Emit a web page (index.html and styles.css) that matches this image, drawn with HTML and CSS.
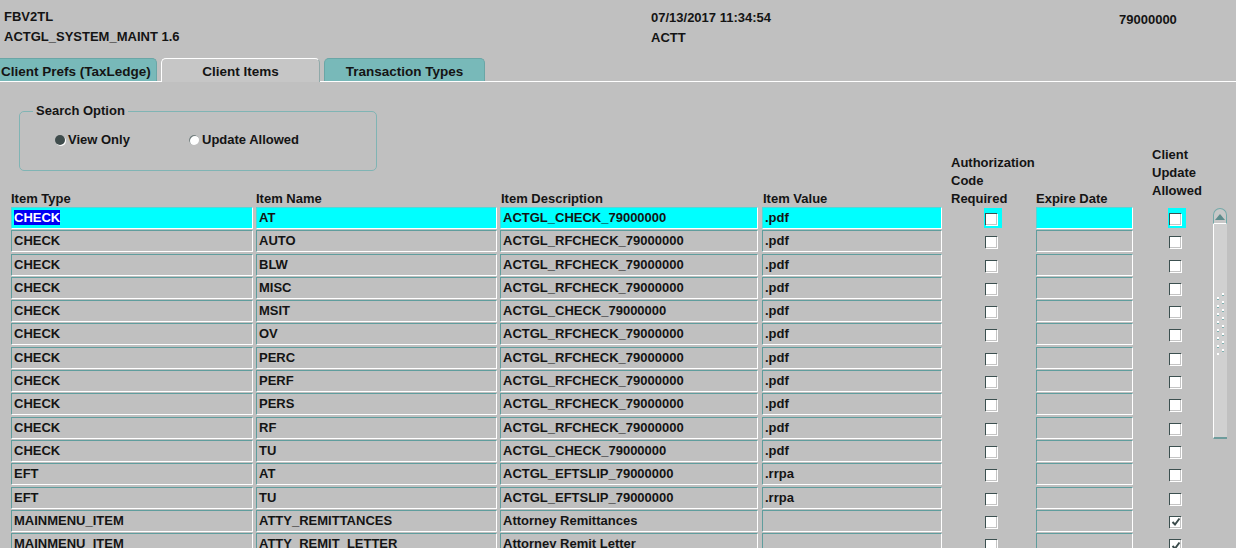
FILE: index.html
```html
<!DOCTYPE html>
<html lang="en">
  <head>
    <meta charset="UTF-8" />
    <title>ACTGL_SYSTEM_MAINT</title>
    <link rel="stylesheet" href="styles.css">
  </head>
  <body>
    <div class="header">
      <div class="header-left">
        <div>FBV2TL</div>
        <div>ACTGL_SYSTEM_MAINT 1.6</div>
      </div>
      <div class="header-mid">
        <div>07/13/2017 11:34:54</div>
        <div>ACTT</div>
      </div>
      <div class="header-right">79000000</div>
    </div>

    <div class="tabs">
      <div class="tab tab-prefs">Client Prefs (TaxLedge)</div>
      <div class="tab tab-items active">Client Items</div>
      <div class="tab tab-types">Transaction Types</div>
    </div>

    <div class="top">
      <fieldset class="search">
        <legend>Search Option</legend>
        <div class="options">
          <label class="radio radio-view"><span class="dot checked"></span>View Only</label>
          <label class="radio"><span class="dot"></span>Update Allowed</label>
        </div>
      </fieldset>
      <div class="label col-1">Item Type</div>
      <div class="label col-2">Item Name</div>
      <div class="label col-3">Item Description</div>
      <div class="label col-4">Item Value</div>
      <div class="label tall col-5">Authorization<br>Code<br>Required</div>
      <div class="label col-6">Expire Date</div>
      <div class="label tall col-7">Client<br>Update<br>Allowed</div>
    </div>

    <div class="list">
      <div class="rows" id="rows"></div>
      <div class="scrollbar">
        <div class="sb-up">
          <svg width="10" height="6" viewBox="0 0 10 6"><polygon points="5,0 10,6 0,6" fill="#5d8c8c"/></svg>
        </div>
        <div class="sb-thumb">
          <svg class="grip" width="8" height="62" viewBox="0 0 8 62">
            <g id="g1">
              <rect x="5" y="0" width="2" height="2" fill="#fff"/><rect x="5" y="2" width="2" height="1" fill="#7fb0b0"/>
              <rect x="0" y="4" width="2" height="2" fill="#fff"/><rect x="0" y="6" width="2" height="1" fill="#7fb0b0"/>
            </g>
            <use href="#g1" y="8"/><use href="#g1" y="16"/><use href="#g1" y="24"/>
            <use href="#g1" y="32"/><use href="#g1" y="40"/><use href="#g1" y="48"/><use href="#g1" y="56"/>
          </svg>
        </div>
      </div>
    </div>

    <script>
      const items = [
        ["CHECK", "AT", "ACTGL_CHECK_79000000", ".pdf", false],
        ["CHECK", "AUTO", "ACTGL_RFCHECK_79000000", ".pdf", false],
        ["CHECK", "BLW", "ACTGL_RFCHECK_79000000", ".pdf", false],
        ["CHECK", "MISC", "ACTGL_RFCHECK_79000000", ".pdf", false],
        ["CHECK", "MSIT", "ACTGL_CHECK_79000000", ".pdf", false],
        ["CHECK", "OV", "ACTGL_RFCHECK_79000000", ".pdf", false],
        ["CHECK", "PERC", "ACTGL_RFCHECK_79000000", ".pdf", false],
        ["CHECK", "PERF", "ACTGL_RFCHECK_79000000", ".pdf", false],
        ["CHECK", "PERS", "ACTGL_RFCHECK_79000000", ".pdf", false],
        ["CHECK", "RF", "ACTGL_RFCHECK_79000000", ".pdf", false],
        ["CHECK", "TU", "ACTGL_CHECK_79000000", ".pdf", false],
        ["EFT", "AT", "ACTGL_EFTSLIP_79000000", ".rrpa", false],
        ["EFT", "TU", "ACTGL_EFTSLIP_79000000", ".rrpa", false],
        ["MAINMENU_ITEM", "ATTY_REMITTANCES", "Attorney Remittances", "", true],
        ["MAINMENU_ITEM", "ATTY_REMIT_LETTER", "Attorney Remit Letter", "", true]
      ];

      const tick = '<svg width="10" height="10" viewBox="0 0 10 10"><path d="M1.5 5 L4 7.5 L8.5 1.5" fill="none" stroke="#3b4b4b" stroke-width="2"/></svg>';
      const rows = document.getElementById("rows");

      items.forEach((item, i) => {
        const [type, name, desc, value, client] = item;
        const row = document.createElement("div");
        row.className = "row" + (i === 0 ? " current" : "");
        const typeText = i === 0 ? '<span class="sel">' + type + "</span>" : type;
        row.innerHTML =
          '<div class="field f-type">' + typeText + "</div>" +
          '<div class="field f-name">' + name + "</div>" +
          '<div class="field f-desc">' + desc + "</div>" +
          '<div class="field f-value">' + value + "</div>" +
          '<div class="chk chk-auth"><div class="hl"><div class="box"></div></div></div>' +
          '<div class="field f-expire"></div>' +
          '<div class="chk chk-client"><div class="hl"><div class="box">' + (client ? tick : "") + "</div></div></div>";
        rows.appendChild(row);
      });
    </script>
  </body>
</html>
```

FILE: styles.css
```css
body {
  margin: 0;
  width: 1236px;
  height: 548px;
  overflow: hidden;
  background: #c0c0c0;
  color: #141414;
  font: bold 13px "Liberation Sans", Arial, sans-serif;
}

/* header */
.header {
  display: flex;
  height: 58px;
  padding-left: 4px;
  box-sizing: border-box;
  line-height: 20px;
}
.header-left {
  width: 647px;
  padding-top: 7px;
}
.header-mid {
  width: 468px;
  padding-top: 8px;
}
.header-right {
  padding-top: 10px;
}

/* tabs */
.tabs {
  display: flex;
  gap: 4px;
  height: 23px;
  border-bottom: 1px solid #fff;
}
.tab {
  box-sizing: border-box;
  height: 23px;
  padding-top: 3px;
  line-height: 20px;
  font-size: 13.5px;
  white-space: nowrap;
  text-align: center;
  background: #78b9b9;
  border: 1px solid #6aa6a6;
  border-bottom: none;
  border-radius: 5px 5px 0 0;
}
.tab-prefs {
  width: 157px;
  padding-left: 1px;
  text-align: left;
  border-left: none;
  border-radius: 0 5px 0 0;
}
.tab-items {
  width: 159px;
}
.tab-types {
  width: 161px;
}
.tab.active {
  height: 24px;
  margin-bottom: -1px;
  background: #c6c6c6;
  border-color: #fff #8fa9a9 #c6c6c6 #fff;
}

/* search option + column labels */
.top {
  display: grid;
  grid-template-columns: 245px 244px 262px 180px 94px 97px 80px;
  grid-template-rows: auto 36px;
  padding: 1px 0 0 11px;
}
.search {
  grid-column: 1 / 4;
  grid-row: 1;
  box-sizing: border-box;
  width: 358px;
  height: 68px;
  margin: 20px 0 0 8px;
  padding: 0;
  border: 1px solid #80b4b4;
  border-radius: 5px;
}
.search legend {
  margin-left: 13px;
  padding: 0 3px;
  line-height: 16px;
}
.options {
  display: flex;
  margin-top: 13px;
  padding-left: 35px;
  line-height: 16px;
}
.radio {
  display: flex;
  align-items: center;
  gap: 3px;
}
.radio-view {
  width: 134px;
}
.dot {
  width: 10px;
  height: 10px;
  border-radius: 50%;
  background: #fff;
  box-shadow: inset 1px 1px 0 #6f7b7b;
}
.dot.checked {
  background: #3f4c4c;
  box-shadow: 1px 1px 0 #fff;
}
.label {
  grid-row: 2;
  align-self: end;
  margin-bottom: -1px;
  line-height: 18px;
}
.label.tall {
  grid-row: 1 / 3;
}
.col-1 { grid-column: 1; }
.col-2 { grid-column: 2; }
.col-3 { grid-column: 3; padding-left: 1px; }
.col-4 { grid-column: 4; padding-left: 1px; }
.col-5 { grid-column: 5; padding-left: 9px; }
.col-6 { grid-column: 6; }
.col-7 { grid-column: 7; padding-left: 19px; padding-bottom: 8px; }

/* rows */
.list {
  display: flex;
  padding-left: 11px;
}
.rows {
  width: 1202px;
}
.row {
  display: flex;
  height: 23.3px;
}
.field {
  box-sizing: border-box;
  height: 22px;
  padding-left: 2px;
  line-height: 20px;
  white-space: nowrap;
  overflow: hidden;
  border: 1px solid;
  border-color: #5f9d9d #fff #fff #5f9d9d;
}
.f-type { width: 242px; margin-right: 3px; }
.f-name { width: 241px; margin-right: 3px; }
.f-desc { width: 258px; margin-right: 4px; }
.f-value { width: 180px; }
.f-expire { width: 97px; }
.current .field {
  background: #00ffff;
  border-color: #4fd9d9 #fff #fff #4fd9d9;
}
.sel {
  background: #0000f4;
  color: #fff;
}
.chk {
  box-sizing: border-box;
}
.chk-auth {
  width: 94px;
  padding-left: 42px;
}
.chk-client {
  width: 80px;
  padding-left: 35px;
}
.hl {
  box-sizing: border-box;
  width: 18px;
  height: 20px;
  margin-top: 1px;
  padding: 5px 0 0 1px;
}
.current .hl {
  background: #00ffff;
}
.box {
  box-sizing: border-box;
  width: 12px;
  height: 12px;
  background: #fff;
  border-top: 1px solid #3c5050;
  border-left: 1px solid #3c5050;
  box-shadow: inset -1px -1px 0 #c4c4c4, 1px 1px 0 #fff;
  display: flex;
  align-items: center;
  justify-content: center;
}

/* scrollbar */
.scrollbar {
  display: flex;
  flex-direction: column;
  width: 14px;
  height: 231px;
  margin-top: 1px;
}
.sb-up {
  box-sizing: border-box;
  height: 16px;
  display: flex;
  align-items: center;
  justify-content: center;
  padding-top: 1px;
  background: #c8c8c8;
  border: 1px solid #74a9a9;
  border-bottom: 1px solid #fff;
  border-radius: 7px 7px 0 0;
}
.sb-thumb {
  flex: 1;
  display: flex;
  align-items: center;
  justify-content: center;
  padding-bottom: 14px;
  background: #d0d0d0;
  border-left: 1px solid #fff;
  border-bottom: 2px solid #6e9c9c;
}
```
